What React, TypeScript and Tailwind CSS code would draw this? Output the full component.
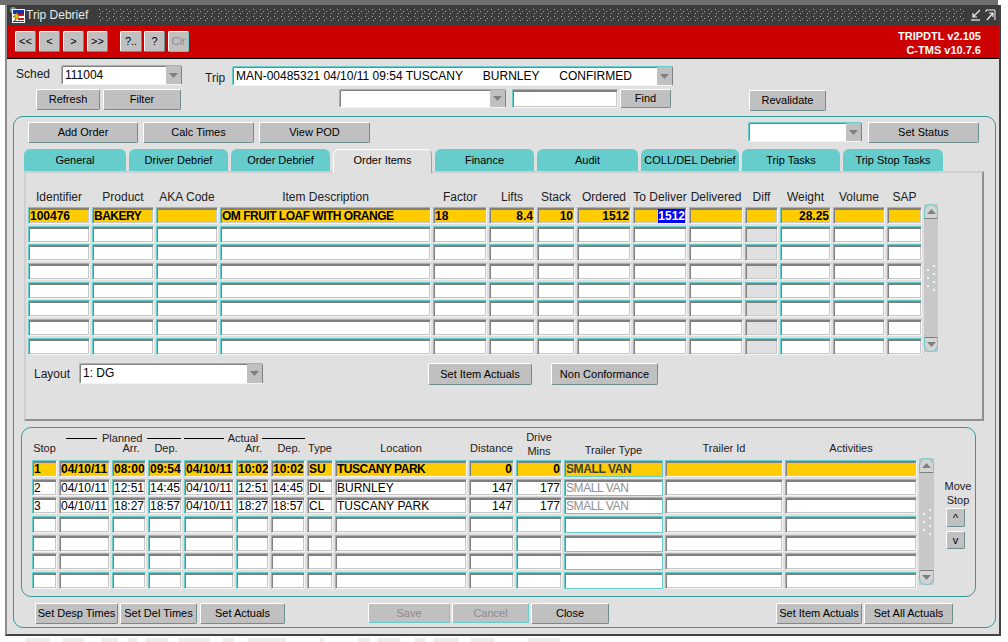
import React from 'react';

const btn = 'flex shrink-0 items-center justify-center whitespace-nowrap rounded-[2px] border border-t-white border-l-white border-r-[#6f8f8f] border-b-[#6f8f8f] bg-[#c0c0c0] text-[11px] text-black';
const btnOff = 'flex shrink-0 items-center justify-center whitespace-nowrap rounded-[2px] border border-t-white border-l-white border-r-[#66cccc] border-b-[#66cccc] bg-[#c0c0c0] text-[11px] text-[#8c8c8c]';
const field = 'border border-t-[#66cccc] border-l-[#66cccc] border-r-[#f4f4f4] border-b-[#f4f4f4] shadow-[inset_1px_0_0_#808080,inset_0_2px_0_#808080,inset_-1px_-1px_0_#c8c8c8] overflow-hidden whitespace-pre px-[1px] text-[12px] leading-[16px] text-black';
const fieldTeal = 'border border-[#66cccc] shadow-[inset_1px_0_0_#808080,inset_0_2px_0_#808080] overflow-hidden whitespace-pre px-[1px] text-[12px] leading-[16px] tracking-[-0.4px]';

const itemCols = 'grid grid-cols-[62px_62px_62px_211px_54px_46px_38px_54px_54px_54px_33px_51px_52px_35px] gap-x-[2px]';
const stopCols = 'grid grid-cols-[25px_51px_34px_34px_50px_33px_34px_26px_132px_45px_46px_99px_118px_132px] gap-x-[2px]';

const itemHeaders = ['Identifier', 'Product', 'AKA Code', 'Item Description', 'Factor', 'Lifts', 'Stack', 'Ordered', 'To Deliver', 'Delivered', 'Diff', 'Weight', 'Volume', 'SAP'];
const itemFirst = ['100476', 'BAKERY', '', 'OM FRUIT LOAF WITH ORANGE', '18', '8.4', '10', '1512', '', '', '', '28.25', '', ''];
const itemRight = [5, 6, 7, 8, 11];

const stopRows = [
  ['1', '04/10/11', '08:00', '09:54', '04/10/11', '10:02', '10:02', 'SU', 'TUSCANY PARK', '0', '0', 'SMALL VAN', '', ''],
  ['2', '04/10/11', '12:51', '14:45', '04/10/11', '12:51', '14:45', 'DL', 'BURNLEY', '147', '177', 'SMALL VAN', '', ''],
  ['3', '04/10/11', '18:27', '18:57', '04/10/11', '18:27', '18:57', 'CL', 'TUSCANY PARK', '147', '177', 'SMALL VAN', '', ''],
  ['', '', '', '', '', '', '', '', '', '', '', '', '', ''],
  ['', '', '', '', '', '', '', '', '', '', '', '', '', ''],
  ['', '', '', '', '', '', '', '', '', '', '', '', '', ''],
  ['', '', '', '', '', '', '', '', '', '', '', '', '', ''],
];

const tabs = [
  { label: 'General', w: 'w-[102px]' },
  { label: 'Driver Debrief', w: 'w-[99px]' },
  { label: 'Order Debrief', w: 'w-[99px]' },
  { label: 'Order Items', w: 'w-[99px]', active: true },
  { label: 'Finance', w: 'w-[99px]' },
  { label: 'Audit', w: 'w-[101px]' },
  { label: 'COLL/DEL Debrief', w: 'w-[98px]' },
  { label: 'Trip Tasks', w: 'w-[98px]' },
  { label: 'Trip Stop Tasks', w: 'w-[100px]' },
];

const ghostBlocks = [
  'ml-[25px] w-[25px]', 'ml-[13px] w-[21px]', 'ml-[17px] w-[17px]', 'ml-[10px] w-[9px]', 'ml-[8px] w-[23px]',
  'ml-[11px] w-[31px]', 'ml-[13px] w-[11px]', 'ml-[14px] w-[38px]', 'ml-[34px] w-[4px]', 'ml-[34px] w-[12px]',
  'ml-[7px] w-[23px]', 'ml-[15px] w-[10px]', 'ml-[8px] w-[26px]', 'ml-[12px] w-[24px]', 'ml-[33px] w-[32px]',
];

const Arrow = () => (
  <div className="flex h-full w-[15px] shrink-0 items-center justify-center bg-[#c0c0c0]">
    <svg width="9" height="5" viewBox="0 0 9 5"><polygon points="0,0 9,0 4.5,5" fill="#808080" /></svg>
  </div>
);

const Combo = ({ className, text }: { className: string; text?: string }) => (
  <div className={`flex shrink-0 items-stretch rounded-[2px] border border-t-[#66cccc] border-l-[#66cccc] border-r-[#808080] border-b-[#f4f4f4] bg-white shadow-[inset_1px_1px_0_#808080] ${className}`}>
    <div className="min-w-0 flex-1 overflow-hidden whitespace-pre px-[3px] text-[12px] leading-[18px] text-black">{text}</div>
    <Arrow />
  </div>
);

const ScrollBar = ({ className }: { className: string }) => (
  <div className={`flex shrink-0 flex-col items-center justify-between bg-[#c8c8c8] ${className}`}>
    <div className="flex h-[15px] w-full items-center justify-center rounded-t-[7px] border border-[#66cccc] border-b-[#808080] bg-[#d4d4d4]">
      <svg width="9" height="5" viewBox="0 0 9 5"><polygon points="4.5,0 9,5 0,5" fill="#808080" /></svg>
    </div>
    <svg width="8" height="26" viewBox="0 0 8 26">
      {[0, 8, 16, 24].map(y => (
        <rect key={y} x="6" y={y} width="2" height="2" fill="#e8f8f8" />
      ))}
      {[4, 12, 20].map(y => (
        <rect key={y} x="0" y={y} width="2" height="2" fill="#e8f8f8" />
      ))}
    </svg>
    <div className="flex h-[15px] w-full items-center justify-center rounded-b-[7px] border border-[#66cccc] border-t-[#808080] bg-[#d4d4d4]">
      <svg width="9" height="5" viewBox="0 0 9 5"><polygon points="0,0 9,0 4.5,5" fill="#808080" /></svg>
    </div>
  </div>
);

const TitleBar = () => (
  <div className="flex h-[20px] shrink-0 items-center bg-[#3c3c3c]">
    <svg className="ml-[2px] shrink-0" width="17" height="18" viewBox="0 0 17 18">
      <circle cx="4" cy="4" r="3" fill="#6f9f8f" />
      <rect x="3" y="3" width="13" height="14" fill="#fff" />
      <rect x="4" y="4" width="11" height="4" fill="#1a2fb0" />
      <rect x="9" y="8" width="6" height="2" fill="#d01818" />
      <rect x="9" y="12" width="6" height="2" fill="#d01818" />
      <rect x="4" y="15" width="11" height="1" fill="#1a2fb0" />
      <polygon points="9,5 4,11 7,11 5,16 11,9 8,9" fill="#f0d000" stroke="#222" strokeWidth="0.5" />
    </svg>
    <span className="w-[72px] shrink-0 text-[12px] leading-none text-[#e8e8e8]">Trip Debrief</span>
    <svg className="h-[14px] min-w-0 flex-1" aria-hidden="true">
      <defs>
        <pattern id="dots" width="14" height="7" patternUnits="userSpaceOnUse">
          <rect x="1" y="1" width="1" height="1" fill="#66cccc" />
          <rect x="8" y="1" width="1" height="1" fill="#a8a8a8" />
          <rect x="4" y="3" width="1" height="1" fill="#a8a8a8" />
          <rect x="11" y="3" width="1" height="1" fill="#66cccc" />
          <rect x="2" y="5" width="1" height="1" fill="#a8a8a8" />
          <rect x="9" y="5" width="1" height="1" fill="#66cccc" />
        </pattern>
      </defs>
      <rect width="100%" height="100%" fill="url(#dots)" />
    </svg>
    <svg className="ml-[3px] shrink-0" width="12" height="12" viewBox="0 0 12 12" fill="none" stroke="#f0f0f0" strokeWidth="1.2">
      <path d="M10 1 L3 8 M3 4 V8 H7" />
      <path d="M1 11 H10" />
    </svg>
    <svg className="mx-[3px] shrink-0" width="11" height="12" viewBox="0 0 11 12" fill="none" stroke="#f0f0f0" strokeWidth="1">
      <path d="M1 3 V1 H10 V11" />
      <path d="M2 11 L8 4 M4 4 H8 V8" strokeWidth="1.2" />
    </svg>
  </div>
);

const RedBar = () => (
  <div className="flex h-[34px] shrink-0 items-start justify-between border-b border-b-black bg-[#cc0000] pl-[8px] pr-[18px]">
    <div className="mt-[6px] flex">
      <div className={`${btn} h-[21px] w-[21px]`}>&lt;&lt;</div>
      <div className={`${btn} ml-[3px] h-[21px] w-[21px]`}>&lt;</div>
      <div className={`${btn} ml-[3px] h-[21px] w-[21px]`}>&gt;</div>
      <div className={`${btn} ml-[3px] h-[21px] w-[21px]`}>&gt;&gt;</div>
      <div className={`${btn} ml-[12px] h-[21px] w-[22px]`}>?..</div>
      <div className={`${btn} ml-[2px] h-[21px] w-[21px]`}>?</div>
      <div className={`${btnOff} ml-[3px] h-[21px] w-[21px]`}>Clr</div>
    </div>
    <div className="mt-[4px] text-right text-[11px] font-bold leading-[14px] text-white">
      <div>TRIPDTL v2.105</div>
      <div>C-TMS v10.7.6</div>
    </div>
  </div>
);

const ItemsGrid = () => (
  <div className="mt-[16px] ml-[2px]">
    <div className={`${itemCols} mb-[2px] h-[16px]`}>
      {itemHeaders.map(h => (
        <div key={h} className="flex items-center justify-center whitespace-nowrap text-[12px] leading-none text-[#202020]">{h}</div>
      ))}
    </div>
    <div className="flex">
      <div className={`${itemCols} auto-rows-[17px] gap-y-[1.7px]`}>
        {itemFirst.map((v, i) => (
          <div key={i} className={`${field} bg-[#ffcc00] font-bold ${itemRight.includes(i) ? 'text-right' : 'text-left'} ${i === 1 || i === 3 ? 'tracking-[-0.5px]' : ''}`}>
            {i === 8 ? <span className="bg-[#0000ff] text-white">1512</span> : v}
          </div>
        ))}
        {Array.from({ length: 7 * 14 }).map((_, i) => (
          <div key={i} className={`${field} ${i % 14 === 10 ? 'bg-[#e0e0e0]' : 'bg-white'}`} />
        ))}
      </div>
      <ScrollBar className="-mt-[3px] ml-[2px] h-[148px] w-[14px]" />
    </div>
  </div>
);

const StopsGrid = () => (
  <div className={`${stopCols} auto-rows-[17px] gap-y-[1.7px]`}>
    {stopRows.map((row, r) =>
      row.map((v, i) => {
        const first = r === 0;
        const right = i === 9 || i === 10;
        if (i === 11) {
          return (
            <div key={`${r}-${i}`} className={`${fieldTeal} ${first ? 'bg-[#ffcc00] font-bold text-[#404040]' : 'bg-white text-[#909090]'}`}>{v}</div>
          );
        }
        return (
          <div key={`${r}-${i}`} className={`${field} ${first ? 'bg-[#ffcc00] font-bold' : 'bg-white'} ${right ? 'text-right' : 'text-left'} ${first && i === 8 ? 'tracking-[-0.5px]' : ''}`}>{v}</div>
        );
      })
    )}
  </div>
);

const StopsHeader = () => {
  const label = 'flex h-[14px] items-center justify-center whitespace-nowrap text-[11px] leading-none text-[#202020]';
  return (
    <div className={`${stopCols} mb-[5px] mt-[3px] grid-rows-[10px_14px]`}>
      <div />
      <div className="col-span-3 flex h-[14px] items-center pl-[7px] text-[11px] leading-none text-[#202020]">
        <div className="h-px w-[31px] bg-black" />
        <span className="mx-[5px]">Planned</span>
        <div className="h-px w-[34px] bg-black" />
      </div>
      <div className="col-span-3 flex h-[14px] items-center text-[11px] leading-none text-[#202020]">
        <div className="h-px w-[40px] bg-black" />
        <span className="mx-[4px]">Actual</span>
        <div className="h-px w-[43px] bg-black" />
      </div>
      <div /><div /><div />
      <div className={`${label} -mt-[1px]`}>Drive</div>
      <div /><div /><div />
      <div className={label}>Stop</div>
      <div />
      <div className={`${label} pl-[4px]`}>Arr.</div>
      <div className={`${label} pl-[2px]`}>Dep.</div>
      <div />
      <div className={`${label} pl-[2px]`}>Arr.</div>
      <div className={`${label} pl-[2px]`}>Dep.</div>
      <div className={label}>Type</div>
      <div className={label}>Location</div>
      <div className={label}>Distance</div>
      <div className={`${label} mt-[3px]`}>Mins</div>
      <div className={`${label} mt-[2px]`}>Trailer Type</div>
      <div className={label}>Trailer Id</div>
      <div className={label}>Activities</div>
    </div>
  );
};

export default function App() {
  return (
    <div className="h-[642px] w-[1008px] overflow-hidden bg-white font-['Liberation_Sans',Arial,sans-serif]">
      <div className="h-[5px] w-[998px] bg-[#6e6e6e]" />
      <div className="ml-[5px] flex h-[631px] w-[996px] flex-col border-x-2 border-b-2 border-l-[#8c8c8c] border-r-[#444444] border-b-[#444444] bg-[#e0e0e0]">
        <TitleBar />
        <RedBar />

        {/* Sched / Trip header */}
        <div className="mt-[6px] flex h-[21px] shrink-0 items-start pl-[9px]">
          <div className="w-[45px] text-[12px] leading-[18px] text-[#202020]">Sched</div>
          <Combo className="h-[20px] w-[121px]" text="111004" />
          <div className="ml-[23px] mt-[4px] w-[27px] text-[12px] leading-[18px] text-[#202020]">Trip</div>
          <Combo className="mt-[1px] h-[20px] w-[441px]" text="MAN-00485321 04/10/11 09:54 TUSCANY      BURNLEY      CONFIRMED" />
        </div>
        <div className="mt-[3px] flex h-[22px] shrink-0 items-start pl-[29px]">
          <div className={`${btn} h-[21px] w-[64px]`}>Refresh</div>
          <div className={`${btn} ml-[3px] h-[21px] w-[78px]`}>Filter</div>
          <Combo className="ml-[158px] h-[19px] w-[167px]" />
          <div className={`${field} ml-[6px] h-[19px] w-[106px] shrink-0 bg-white`} />
          <div className={`${btn} ml-[2px] h-[19px] w-[51px]`}>Find</div>
          <div className={`${btn} ml-[78px] mt-[1px] h-[21px] w-[77px]`}>Revalidate</div>
        </div>

        {/* Main panel */}
        <div className="ml-[6px] mt-[5px] flex h-[512px] w-[983px] shrink-0 flex-col rounded-[10px] border border-[#339999]">
          <div className="mt-[5px] flex h-[21px] shrink-0 pl-[14px]">
            <div className={`${btn} h-[21px] w-[110px]`}>Add Order</div>
            <div className={`${btn} ml-[5px] h-[21px] w-[111px]`}>Calc Times</div>
            <div className={`${btn} ml-[5px] h-[21px] w-[111px]`}>View POD</div>
            <Combo className="ml-[378px] h-[20px] w-[114px]" />
            <div className={`${btn} ml-[6px] h-[21px] w-[111px]`}>Set Status</div>
          </div>

          <div className="ml-[10px] mt-[6px] flex h-[22px] shrink-0 gap-x-[3px]">
            {tabs.map(t => (
              <div
                key={t.label}
                className={t.active
                  ? `${t.w} relative z-10 flex h-[24px] items-center justify-center whitespace-nowrap rounded-t-[6px] border-x border-t border-t-white border-l-white border-r-[#a0a0a0] bg-[#e0e0e0] pb-[2px] text-[11px] text-black`
                  : `${t.w} flex h-[22px] items-center justify-center whitespace-nowrap rounded-t-[6px] bg-[#66cccc] text-[11px] text-black`}
              >
                {t.label}
              </div>
            ))}
          </div>

          <div className="ml-[10px] flex h-[250px] w-[960px] shrink-0 flex-col border-2 border-t-[#cfcfcf] border-l-[#cfcfcf] border-r-[#909090] border-b-[#909090]">
            <ItemsGrid />
            <div className="mt-[8px] flex h-[22px] shrink-0 items-start pl-[8px]">
              <div className="mt-[2px] w-[45px] text-[12px] leading-[18px] text-[#202020]">Layout</div>
              <Combo className="h-[21px] w-[184px]" text="1: DG" />
              <div className={`${btn} ml-[165px] h-[22px] w-[104px]`}>Set Item Actuals</div>
              <div className={`${btn} ml-[19px] h-[22px] w-[107px]`}>Non Conformance</div>
            </div>
          </div>

          {/* Stops panel */}
          <div className="ml-[7px] mt-[6px] flex h-[170px] w-[955px] shrink-0 rounded-[10px] border border-[#339999] pl-[10px]">
            <div className="flex flex-col">
              <StopsHeader />
              <StopsGrid />
            </div>
            <ScrollBar className="ml-[2px] mt-[30px] h-[127px] w-[15px]" />
            <div className="ml-[9px] mt-[51px] flex w-[30px] flex-col text-[11px] leading-[14px] text-[#202020]">
              <div className="text-center">Move</div>
              <div className="text-center">Stop</div>
              <div className={`${btn} ml-[3px] mt-[1px] h-[19px] w-[19px]`}>^</div>
              <div className={`${btn} ml-[3px] mt-[4px] h-[18px] w-[19px]`}>v</div>
            </div>
          </div>

          <div className="mt-[6px] flex h-[21px] shrink-0 pl-[21px]">
            <div className={`${btn} h-[21px] w-[83px]`}>Set Desp Times</div>
            <div className={`${btn} ml-[2px] h-[21px] w-[77px]`}>Set Del Times</div>
            <div className={`${btn} ml-[3px] h-[21px] w-[85px]`}>Set Actuals</div>
            <div className={`${btnOff} ml-[83px] h-[20px] w-[82px]`}>Save</div>
            <div className={`${btnOff} ml-[2px] h-[20px] w-[77px]`}>Cancel</div>
            <div className={`${btn} ml-[2px] h-[21px] w-[78px]`}>Close</div>
            <div className={`${btn} ml-[167px] h-[21px] w-[86px]`}>Set Item Actuals</div>
            <div className={`${btn} ml-[2px] h-[21px] w-[89px]`}>Set All Actuals</div>
          </div>
        </div>
      </div>
      <div className="mt-[2px] flex h-[4px]">
        {ghostBlocks.map(c => (
          <div key={c} className={`h-full bg-[#ececec] ${c}`} />
        ))}
      </div>
    </div>
  );
}
